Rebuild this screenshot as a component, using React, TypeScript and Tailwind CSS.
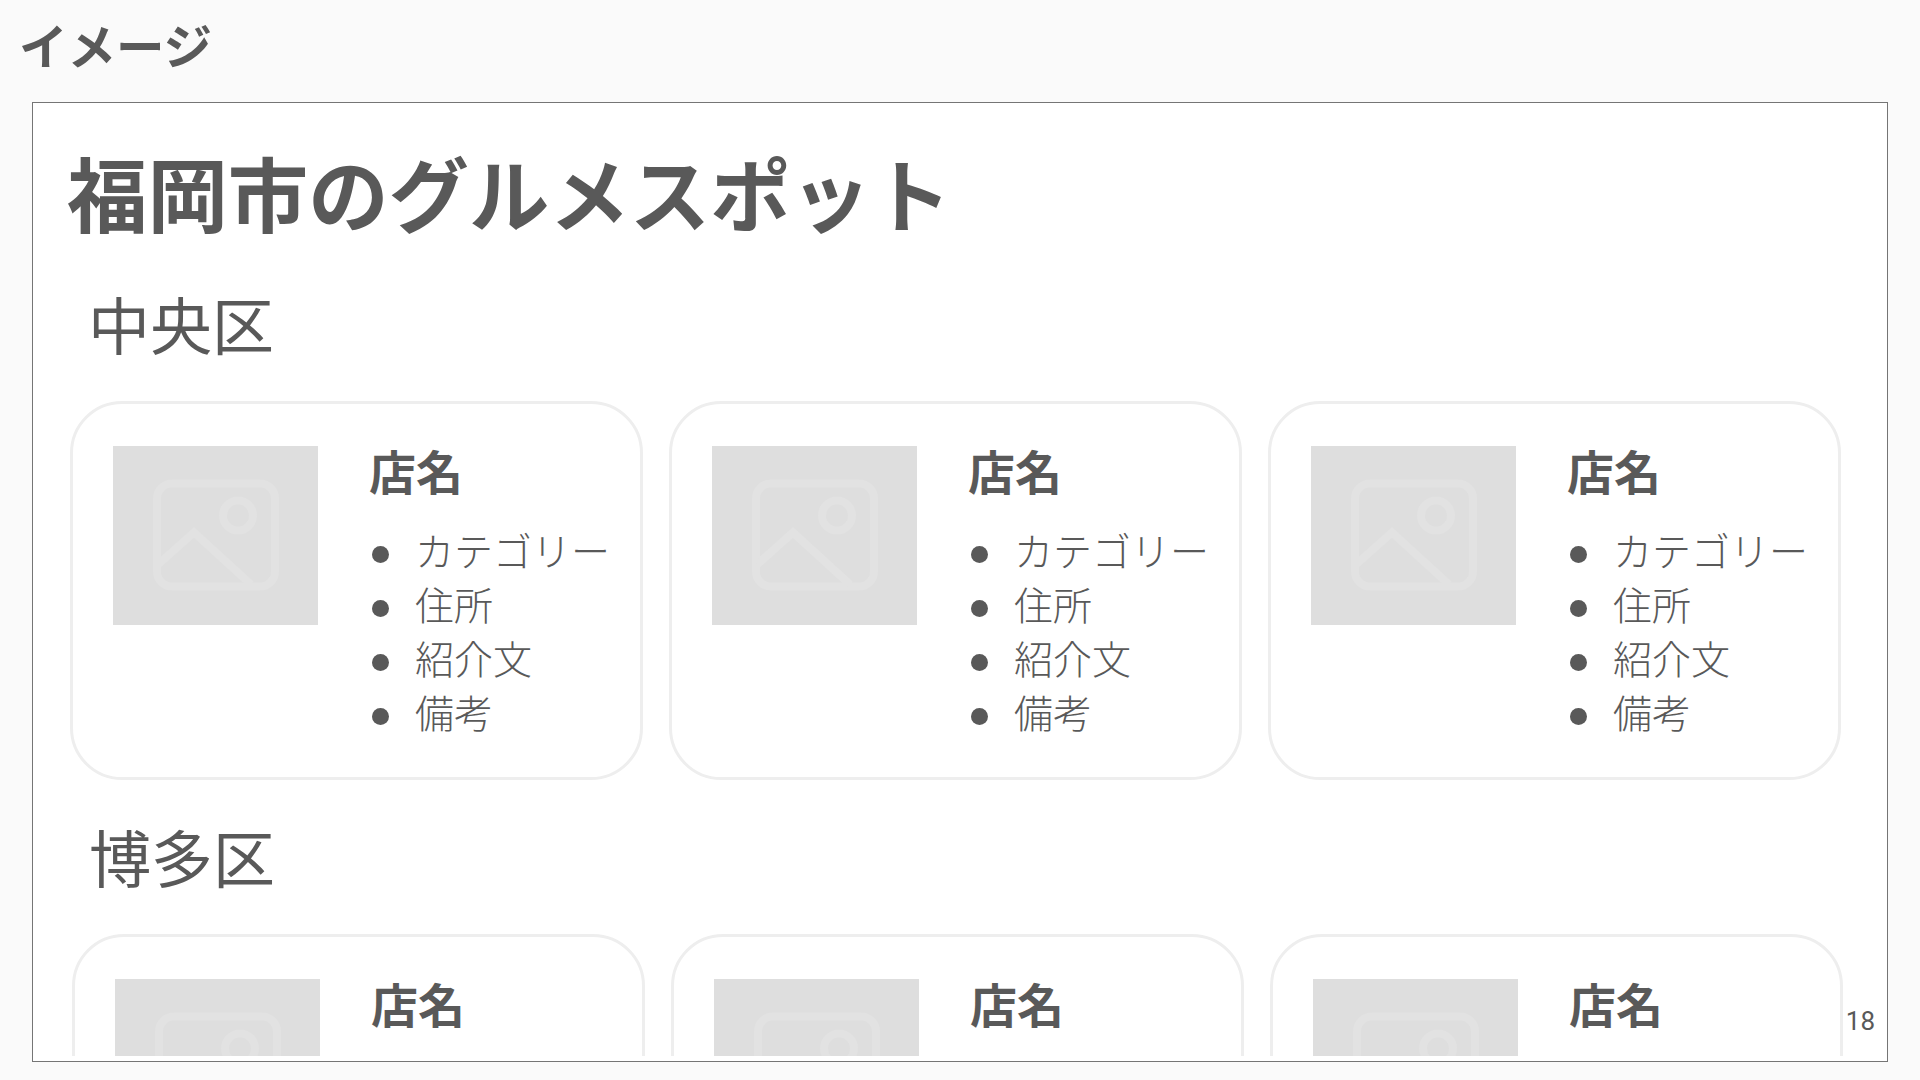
const FONT = "font-['Noto_Sans_CJK_JP','Noto_Sans',sans-serif]"

const ITEMS = ["カテゴリー", "住所", "紹介文", "備考"]

function PlaceholderImage() {
  return (
    <div className="w-[205px] h-[179px] shrink-0 bg-[#dedede]">
      <svg viewBox="0 0 205 178" className="w-full h-full" fill="none" stroke="#e2e2e2" strokeWidth="8">
        <rect x="44" y="37" width="118" height="103" rx="15" />
        <circle cx="125" cy="69" r="15" />
        <path d="M45 118 L81 86 L138 138" />
      </svg>
    </div>
  )
}

function ShopCard({ items }: { items: string[] }) {
  return (
    <div className="w-[573px] h-[379px] shrink-0 flex gap-[50px] pl-10 pt-[42px] bg-white border-[3px] border-[#eeeeee] rounded-[52px]">
      <PlaceholderImage />
      <div className="-mt-[3px] pl-px">
        <div className="text-[47px] leading-[54px] font-bold whitespace-nowrap">店名</div>
        <ul className="mt-[29px]">
          {items.map((item) => (
            <li key={item} className="flex items-center h-[54px] pl-[3px] text-[39px] font-light whitespace-nowrap">
              <span className="size-[17px] mt-[2px] rounded-full bg-[#595959] mr-[26px]" />
              <span className="pb-[7px]">{item}</span>
            </li>
          ))}
        </ul>
      </div>
    </div>
  )
}

function CardRow({ className, items }: { className: string; items: string[] }) {
  return (
    <div className={`flex gap-[26px] ${className}`}>
      <ShopCard items={items} />
      <ShopCard items={items} />
      <ShopCard items={items} />
    </div>
  )
}

export default function App() {
  return (
    <div className={`h-screen overflow-hidden bg-[#fafafa] text-[#595959] ${FONT}`}>
      <div className="h-[102px] pl-[19px] pt-[15px] text-[48.5px] leading-[58px] font-bold">イメージ</div>

      <div className="relative ml-8 w-[1856px] h-[960px] border border-[#757575] bg-white">
        <div className="h-[953px] overflow-hidden pt-[40px]">
          <h1 className="pl-[34px] text-[80.4px] leading-[96px] font-bold whitespace-nowrap">福岡市のグルメスポット</h1>

          <h2 className="mt-[48px] pl-[55px] text-[62px] leading-[72px] font-normal">中央区</h2>
          <CardRow className="mt-[42px] ml-[37px]" items={ITEMS} />

          <h2 className="mt-[40px] pl-[56px] text-[62px] leading-[72px] font-normal">博多区</h2>
          <CardRow className="mt-[42px] ml-[39px]" items={[]} />
        </div>

        {/* Page number */}
        <span className="absolute right-[12px] bottom-[25px] text-[26px] leading-[30px] font-['Roboto',sans-serif]">18</span>
      </div>
    </div>
  )
}
